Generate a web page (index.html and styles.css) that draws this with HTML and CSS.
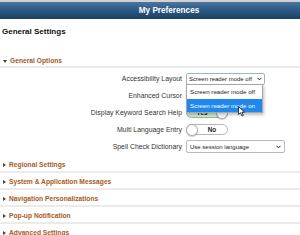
FILE: index.html
```html
<!DOCTYPE html>
<html>
<head>
<meta charset="utf-8">
<link rel="stylesheet" href="styles.css">
</head>
<body>
<div class="strip"></div>
<header class="topbar"><h1>My Preferences</h1></header>
<main class="content">
  <h2 class="page-title">General Settings</h2>
  <section class="group">
    <div class="group-head"><span class="tri-down"></span>General Options</div>
    <div class="form">
      <div class="row">
        <span class="label">Accessibility Layout</span>
        <div class="ctl">
          <div class="select focused small"><span class="val">Screen reader mode off</span><svg class="chev" width="5" height="4" viewBox="0 0 6 4"><path d="M0.6 0.6 L3 3 L5.4 0.6" fill="none" stroke="#222" stroke-width="1.2"/></svg></div>
          <ul class="dropdown">
            <li>Screen reader mode off</li>
            <li class="hl">Screen reader mode on</li>
          </ul>
        </div>
      </div>
      <div class="row"><span class="label">Enhanced Cursor</span><div class="ctl"></div></div>
      <div class="row">
        <span class="label">Display Keyword Search Help</span>
        <div class="ctl"><div class="toggle on"><span class="tx">Yes</span><span class="knob"></span></div></div>
      </div>
      <div class="row">
        <span class="label">Multi Language Entry</span>
        <div class="ctl"><div class="toggle off"><span class="knob"></span><span class="tx">No</span></div></div>
      </div>
      <div class="row">
        <span class="label">Spell Check Dictionary</span>
        <div class="ctl"><div class="select wide"><span class="val">Use session language</span><svg class="chev" width="5" height="4" viewBox="0 0 6 4"><path d="M0.6 0.6 L3 3 L5.4 0.6" fill="none" stroke="#222" stroke-width="1.2"/></svg></div></div>
      </div>
    </div>
  </section>
  <div class="group-head closed"><span class="tri-right"></span>Regional Settings</div>
  <div class="group-head closed"><span class="tri-right"></span>System &amp; Application Messages</div>
  <div class="group-head closed"><span class="tri-right"></span>Navigation Personalizations</div>
  <div class="group-head closed"><span class="tri-right"></span>Pop-up Notification</div>
  <div class="group-head closed"><span class="tri-right"></span>Advanced Settings</div>
</main>
<svg class="cursor" width="8" height="11" viewBox="0 0 8 11"><path d="M0.5 0.5 L0.5 8.5 L2.5 6.7 L4 10 L5.3 9.4 L3.9 6.2 L6.6 6.2 Z" fill="#fff" stroke="#111" stroke-width="0.8" stroke-linejoin="round"/></svg>
</body>
</html>
```
FILE: styles.css
```css
* { box-sizing: border-box; }
html, body { margin: 0; padding: 0; background: #fff; }
body {
  font-family: "Liberation Sans", Arial, sans-serif;
  width: 300px;
  height: 235px;
  overflow: hidden;
  position: relative;
}
.strip { height: 2px; background: #d2d2d2; }
.topbar {
  height: 17px;
  background: linear-gradient(#48769f, #2e5b86 45%, #1d3f62);
  display: flex;
  align-items: center;
  justify-content: center;
  padding-left: 38px;
}
.topbar h1 {
  margin: 0;
  font-size: 8.2px;
  font-weight: bold;
  color: #fff;
  line-height: 10px;
}
.page-title {
  margin: 0;
  padding: 8px 2px 0;
  font-size: 8px;
  line-height: 10px;
  font-weight: bold;
  color: #111;
}
.group { margin-top: 16px; }
.group-head {
  display: flex;
  align-items: center;
  gap: 3px;
  padding: 4px 0 1px 3px;
  font-size: 6.7px;
  line-height: 8px;
  font-weight: bold;
  color: #a85a1c;
  border-bottom: 2px solid #ebebeb;
}
.group-head.closed {
  padding: 5px 0 2px 3px;
}
.tri-down {
  width: 0; height: 0;
  border-left: 2px solid transparent;
  border-right: 2px solid transparent;
  border-top: 3px solid #444;
}
.tri-right {
  width: 0; height: 0;
  border-top: 2px solid transparent;
  border-bottom: 2px solid transparent;
  border-left: 3px solid #444;
}
.form { padding: 2px 0 1px; }
.row {
  display: grid;
  grid-template-columns: 182px 1fr;
  column-gap: 4px;
  height: 17px;
  align-items: center;
}
.label {
  text-align: right;
  font-size: 6.9px;
  color: #333;
  white-space: nowrap;
}
.ctl { position: relative; height: 13px; display: flex; align-items: center; }
.select {
  height: 12px;
  border: 1px solid #b9b9b9;
  border-radius: 2px;
  display: flex;
  align-items: center;
  justify-content: space-between;
  gap: 1px;
  padding: 0 2px 0 2px;
  font-size: 6px;
  color: #222;
  background: #fff;
  white-space: nowrap;
}
.val { white-space: nowrap; }
.select.small { width: 79px; }
.select.focused { border-color: #9fb3d6; }
.select.wide { width: 99px; height: 13px; padding: 0 3px 0 3px; }
.chev { flex: none; }
.dropdown {
  position: absolute;
  top: 12px;
  left: 0;
  width: 77px;
  margin: 0;
  padding: 0;
  list-style: none;
  background: #fff;
  border: 1px solid #a7a7a7;
  box-shadow: 1px 2px 3px rgba(0,0,0,0.25);
  font-size: 6.2px;
  color: #222;
  z-index: 5;
}
.dropdown li {
  height: 13.5px;
  line-height: 13.5px;
  padding-left: 3px;
  white-space: nowrap;
}
.dropdown li.hl { background: #1e88f0; color: #fff; }
.toggle {
  width: 42px;
  height: 11px;
  border-radius: 6px;
  border: 1px solid #b5b5b5;
  display: flex;
  align-items: center;
  font-size: 6.3px;
  font-weight: bold;
  color: #222;
  position: relative;
}
.toggle.on { background: #d3ecd3; border-color: #8cc08c; }
.toggle .tx { flex: 1; text-align: center; }
.knob {
  width: 12px;
  height: 12px;
  border-radius: 50%;
  background: #fff;
  border: 1px solid #aaa;
  box-shadow: 0 1px 1px rgba(0,0,0,0.2);
  flex: none;
  margin: -1px;
}
.cursor {
  position: absolute;
  left: 238px;
  top: 106px;
  z-index: 10;
}
```
